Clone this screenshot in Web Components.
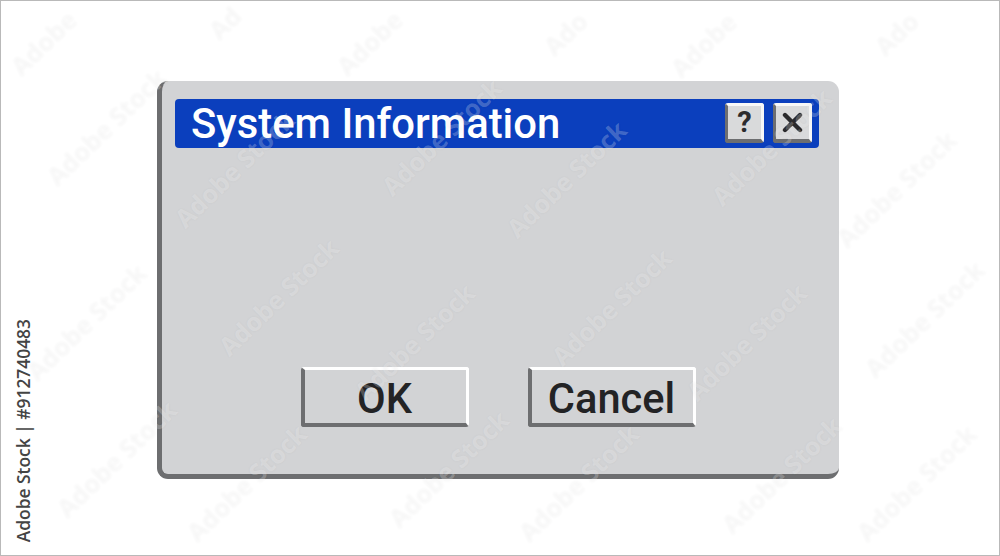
<!DOCTYPE html>
<html>
<head>
<meta charset="utf-8">
<title>System Information</title>
<style>
  html, body { margin: 0; background: #fff; }
</style>
</head>
<body>
<stock-page>
  <system-dialog heading="System Information">
    <bevel-button slot="actions">OK</bevel-button>
    <bevel-button slot="actions">Cancel</bevel-button>
  </system-dialog>
</stock-page>

<script>
// lower-left start of each faint diagonal mark, those at the page edge are shortened
const MARKS = [
  [14, 70, 'Adobe'], [212, 34, 'Ad'], [340, 70, 'Adobe'], [547, 50, 'Ado'], [674, 72, 'Adobe'], [878, 50, 'Ado'],
  [50, 180], [178, 222], [385, 190], [510, 232], [715, 200], [840, 242],
  [222, 350], [30, 375], [358, 395], [555, 360], [690, 395], [868, 372],
  [60, 512], [190, 536], [392, 522], [522, 536], [725, 528], [860, 536]
]

customElements.define('stock-page', class extends HTMLElement {
  constructor() {
    super()
    this.attachShadow({ mode: 'open' }).innerHTML = `
    <style>
    :host {
      display: block;
      position: relative;
      box-sizing: border-box;
      width: 1000px;
      height: 556px;
      padding: 80px 0 0 156px;
      border: 1px solid #b9b9b9;
      overflow: hidden;
      background: #fff;
    }
    .credit {
      position: absolute;
      left: 12px;
      bottom: 13px;
      writing-mode: vertical-rl;
      transform: rotate(180deg);
      font: 600 17.4px/20px "Open Sans", sans-serif;
      color: #444;
      white-space: nowrap;
    }
    .mark {
      position: absolute;
      transform-origin: left center;
      transform: rotate(-44deg);
      font: 700 25px/1 "Open Sans", sans-serif;
      color: rgba(255, 255, 255, .24);
      text-shadow: 0 0 3px rgba(0, 0, 0, .04);
      white-space: nowrap;
      pointer-events: none;
    }
    </style>
    <slot></slot>
    <div class="credit">Adobe Stock | #912740483</div>
    ${MARKS.map(([x, y, text]) => `<div class="mark" style="left:${x}px;top:${y - 13}px">${text || 'Adobe Stock'}</div>`).join('')}
    `
  }
})

customElements.define('system-dialog', class extends HTMLElement {
  constructor() {
    super()
    this.attachShadow({ mode: 'open' }).innerHTML = `
    <style>
    :host {
      display: flex;
      flex-direction: column;
      box-sizing: border-box;
      width: 682px;
      height: 398px;
      padding: 18px 20px 0 13px;
      background: #d2d3d5;
      border-left: 5px solid #6d6e70;
      border-bottom: 5px solid #6d6e70;
      border-radius: 11px;
    }
    .bar {
      display: flex;
      align-items: center;
      height: 49px;
      padding: 0 7px 0 16px;
      background: #0b3fbd;
      border-radius: 4px;
      flex: none;
    }
    h1 {
      flex: 1;
      margin: 0;
      font: 500 41.8px/49px Roboto, sans-serif;
      color: #fff;
      white-space: nowrap;
    }
    .tools {
      display: flex;
      gap: 9px;
      margin-top: -1px;
    }
    .actions {
      display: flex;
      gap: 59px;
      margin-top: 219px;
      padding-left: 126px;
    }
    </style>
    <div class="bar">
      <h1></h1>
      <div class="tools">
        <title-tool>?</title-tool>
        <title-tool>
          <svg width="21" height="21" viewBox="0 0 21 21"><path d="M3 3 18 18M18 3 3 18" stroke="#2b2b2d" stroke-width="4.4" stroke-linecap="round" fill="none"/></svg>
        </title-tool>
      </div>
    </div>
    <div class="actions"><slot name="actions"></slot></div>
    `
    this.shadowRoot.querySelector('h1').textContent = this.getAttribute('heading')
  }
})

customElements.define('title-tool', class extends HTMLElement {
  constructor() {
    super()
    this.attachShadow({ mode: 'open' }).innerHTML = `
    <style>
    :host {
      display: flex;
      align-items: center;
      justify-content: center;
      box-sizing: border-box;
      width: 39px;
      height: 40px;
      background: #d9dadb;
      border-style: solid;
      border-width: 3px 3px 4px 3px;
      border-color: #f7f7f7 #f7f7f7 #6d6e70 #6d6e70;
      border-radius: 3px;
      font: 700 29px/1 Roboto, sans-serif;
      color: #2b2b2d;
    }
    svg { display: block; }
    </style>
    <slot></slot>
    `
  }
})

customElements.define('bevel-button', class extends HTMLElement {
  constructor() {
    super()
    this.attachShadow({ mode: 'open' }).innerHTML = `
    <style>
    :host {
      display: flex;
      align-items: center;
      justify-content: center;
      box-sizing: border-box;
      width: 168px;
      height: 60px;
      padding-top: 5px;
      padding-right: 2px;
      background: #d2d3d5;
      border-style: solid;
      border-width: 3px 3px 4px 4px;
      border-color: #fff #fff #6d6e70 #6d6e70;
      border-radius: 3px;
      font: 500 41.6px/1 Roboto, sans-serif;
      color: #232325;
    }
    </style>
    <slot></slot>
    `
  }
})
</script>
</body>
</html>
